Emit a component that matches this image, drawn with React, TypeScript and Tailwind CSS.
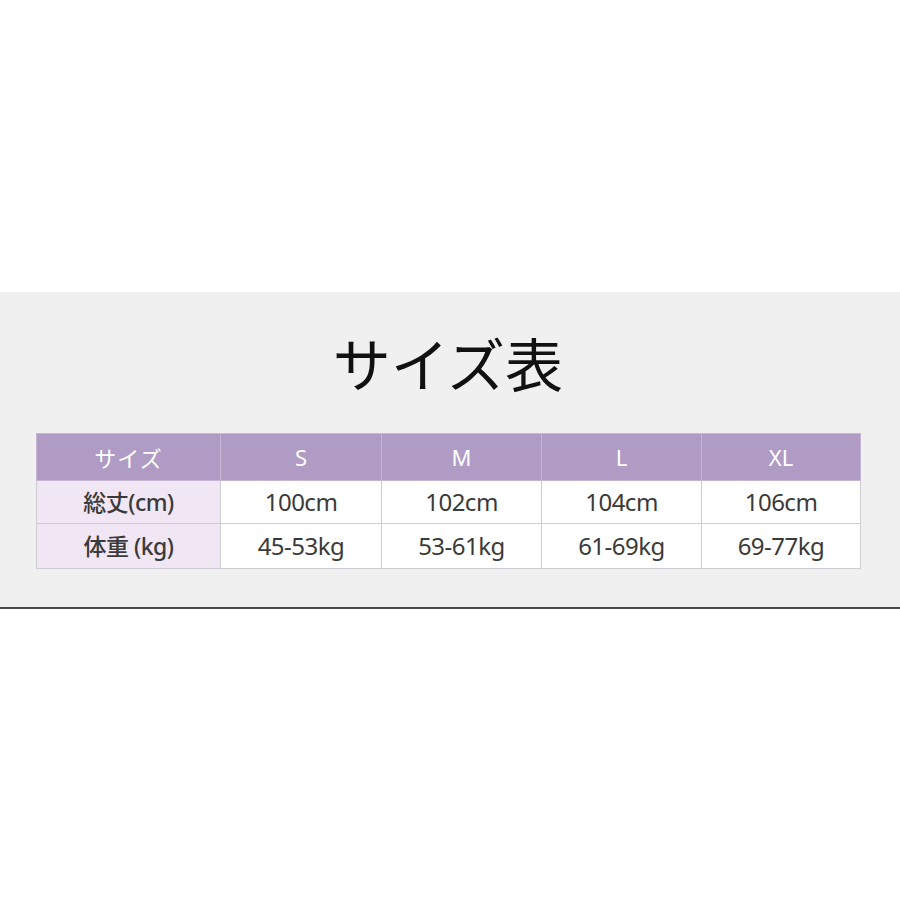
const cols = ["S", "M", "L", "XL"];

const rows = [
  { label: "総丈(cm)", values: ["100cm", "102cm", "104cm", "106cm"] },
  { label: "体重 (kg)", values: ["45-53kg", "53-61kg", "61-69kg", "69-77kg"] },
];

const font = "font-['Noto_Sans','Noto_Sans_CJK_JP',sans-serif]";

export default function App() {
  return (
    <div className={`w-[900px] h-[900px] bg-white ${font}`}>
      <div className="h-[292px]" />
      <section className="h-[317px] bg-[#f0f0f0] border-b-2 border-[#4a4a4a] pt-[41px]">
        <h1 className="text-center text-[58px] leading-[58px] text-[#111] font-normal font-['Noto_Sans_CJK_JP',sans-serif] pr-[4px]">
          サイズ表
        </h1>
        <table className="ml-[36px] mt-[42px] border-collapse table-fixed w-[824px]">
          <colgroup>
            <col className="w-[184px]" />
            <col className="w-[161px]" />
            <col className="w-[160px]" />
            <col className="w-[160px]" />
            <col className="w-[159px]" />
          </colgroup>
          <thead>
            <tr className="h-[47px] bg-[#b09bc5]">
              <th className="border border-[#c6b6d3] text-white text-[22px] font-normal font-['Noto_Sans_CJK_JP',sans-serif] tracking-[1px]">
                サイズ
              </th>
              {cols.map((c) => (
                <th key={c} className="border border-[#c6b6d3] text-white text-[22px] font-normal">
                  {c}
                </th>
              ))}
            </tr>
          </thead>
          <tbody>
            {rows.map((r, i) => (
              <tr key={r.label} className={i === 0 ? "h-[43px]" : "h-[45px]"}>
                <td className="border border-[#cfcdd4] bg-[#f1e6f4] text-center text-[23px] font-medium text-[#3a3a3a] tracking-[-0.5px]">
                  {r.label}
                </td>
                {r.values.map((v) => (
                  <td key={v} className="border border-[#cfcdd4] bg-white text-center text-[24px] text-[#3a3a3a] tracking-[-0.5px]">
                    {v}
                  </td>
                ))}
              </tr>
            ))}
          </tbody>
        </table>
      </section>
    </div>
  );
}
